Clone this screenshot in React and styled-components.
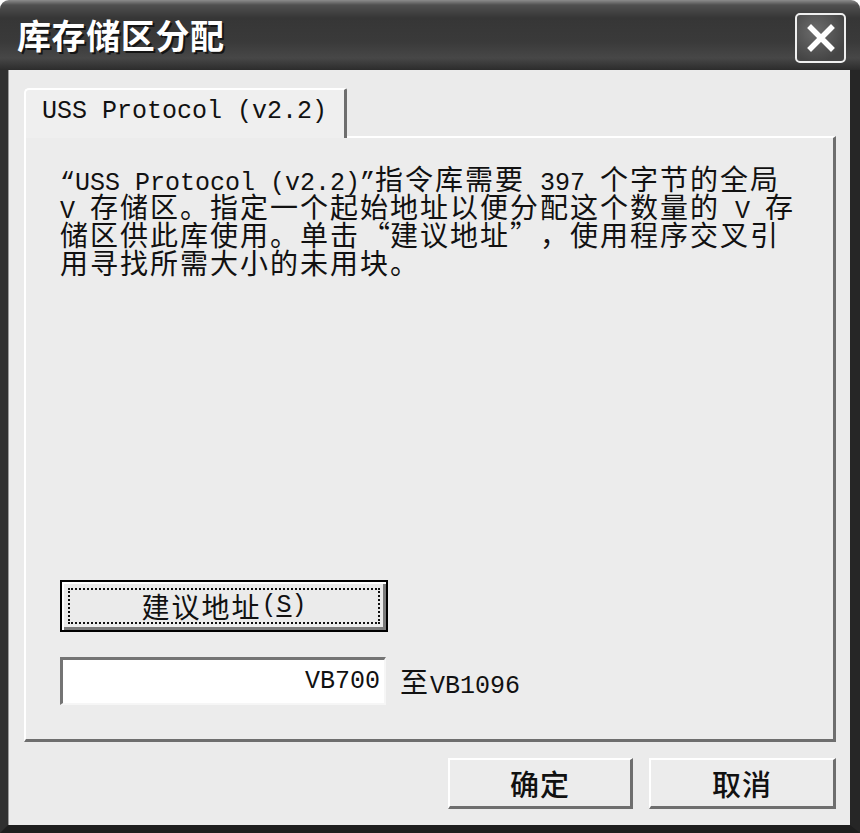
import React from "react";
import styled, { createGlobalStyle } from "styled-components";

const cjk = `"Noto Sans CJK SC", "Noto Sans", sans-serif`;
const mono = `"Liberation Mono", "DejaVu Sans Mono", "Noto Sans CJK SC", monospace`;

const Global = createGlobalStyle`
  html, body { margin: 0; padding: 0; background: #fff; }
  #root { width: 860px; height: 833px; }
`;

const Janela = styled.div`
  width: 860px;
  height: 833px;
  display: flex;
  flex-direction: column;
  border-radius: 9px 9px 0 0;
  overflow: hidden;
  background: #ebebeb;
  font-family: ${cjk};
  color: #111;
`;

const TitleBar = styled.div`
  height: 70px;
  flex-shrink: 0;
  display: flex;
  justify-content: space-between;
  align-items: flex-start;
  padding: 0 14px 0 17px;
  box-sizing: border-box;
  background: linear-gradient(
    to bottom,
    #8c8c8c 0,
    #505050 5px,
    #363636 18px,
    #3a3a3a 42px,
    #474747 58px,
    #2c2c2c 70px
  );
`;

const Title = styled.h1`
  margin: 0;
  padding-top: 11px;
  font-family: ${cjk};
  font-size: 34px;
  line-height: 48px;
  font-weight: 700;
  letter-spacing: 0.6px;
  color: #fff;
  text-shadow: 2px 2px 0 #151515;
`;

const CloseButton = styled.button`
  margin-top: 13px;
  width: 51px;
  height: 50px;
  padding: 0;
  display: flex;
  align-items: center;
  justify-content: center;
  border: 2px solid #efefef;
  border-radius: 5px;
  background: radial-gradient(circle at 40% 35%, #6c6c6c, #454545 75%);
  cursor: pointer;
`;

const Body = styled.div`
  flex: 1;
  display: flex;
  flex-direction: column;
  padding: 18px 14px 16px 16px;
  border-left: 8px solid #303030;
  border-right: 10px solid #262626;
  border-bottom: 8px solid #1e1e1e;
  box-shadow: inset 1px 0 0 #9a9a9a;
`;

const TabStrip = styled.div`
  display: flex;
  height: 48px;
`;

const Tab = styled.div`
  position: relative;
  z-index: 1;
  width: 323px;
  height: 50px;
  margin-bottom: -2px;
  box-sizing: border-box;
  padding: 0 0 2px 16px;
  border-top: 2px solid #fff;
  border-left: 2px solid #fff;
  border-right: 3px solid #6e6e6e;
  border-radius: 5px 2px 0 0;
  background: #efefef;
  font-family: ${mono};
  font-size: 25px;
  line-height: 44px;
  white-space: nowrap;
`;

const Panel = styled.div`
  height: 606px;
  box-sizing: border-box;
  display: flex;
  flex-direction: column;
  padding: 26px 0 34px 34px;
  border-top: 2px solid #fff;
  border-left: 2px solid #fff;
  border-right: 3px solid #6e6e6e;
  border-bottom: 3px solid #6e6e6e;
  background: #ececec;
`;

// texto em celulas de 30px, como a fonte bitmap do original
const Texto = styled.div`
  font-size: 28px;
  letter-spacing: 2px;
  line-height: 28px;
`;

const Linha = styled.div`
  height: 28px;
  white-space: nowrap;
`;

const Mono = styled.span`
  font-family: ${mono};
  font-size: 25px;
  letter-spacing: 0;
  line-height: 0;
`;

const Aspas = styled.span`
  display: inline-block;
  width: 30px;
  letter-spacing: 0;
  text-align: ${(p) => p.$lado};
`;

const SuggestButton = styled.button`
  margin-top: auto;
  width: 328px;
  height: 52px;
  padding: 6px;
  display: flex;
  box-sizing: border-box;
  border: 2px solid #000;
  background: #ebebeb;
  box-shadow: inset 2px 2px 0 #fff, inset -3px -3px 0 #7a7a7a;
  font-family: ${cjk};
  font-size: 28px;
  letter-spacing: 2px;
  color: #111;
  cursor: pointer;
`;

const Foco = styled.span`
  flex: 1;
  display: flex;
  align-items: center;
  justify-content: center;
  border: 2px dotted #111;
  line-height: 28px;
`;

const Sublinhado = styled.span`
  text-decoration: underline;
  text-underline-offset: 3px;
`;

const EnderecoRow = styled.div`
  margin-top: 25px;
  display: flex;
  align-items: center;
  gap: 14px;
`;

const Campo = styled.input`
  width: 326px;
  height: 48px;
  box-sizing: border-box;
  padding: 0 4px 0 0;
  border-top: 3px solid #747474;
  border-left: 3px solid #747474;
  border-right: 2px solid #f6f6f6;
  border-bottom: 2px solid #f6f6f6;
  background: #fff;
  font-family: ${mono};
  font-size: 25px;
  text-align: right;
  color: #111;
  outline: none;
`;

const Faixa = styled.span`
  font-size: 28px;
  letter-spacing: 2px;
  white-space: nowrap;
`;

const Rodape = styled.div`
  margin-top: 16px;
  display: flex;
  justify-content: flex-end;
  gap: 16px;
`;

const Botao = styled.button`
  width: ${(p) => p.$largura}px;
  height: 51px;
  box-sizing: border-box;
  border-top: 2px solid #fff;
  border-left: 2px solid #fff;
  border-right: 3px solid #6e6e6e;
  border-bottom: 3px solid #6e6e6e;
  background: #ececec;
  font-family: ${cjk};
  font-size: 29px;
  font-weight: 500;
  letter-spacing: 1px;
  color: #111;
  cursor: pointer;
`;

function IconeFechar() {
  return (
    <svg width="30" height="30" viewBox="0 0 30 30">
      <path d="M5 5 L25 25 M25 5 L5 25" stroke="#fff" strokeWidth="5.5" strokeLinecap="square" />
    </svg>
  );
}

export default function App() {
  return (
    <>
      <Global />
      <Janela>
        <TitleBar>
          <Title>库存储区分配</Title>
          <CloseButton aria-label="关闭">
            <IconeFechar />
          </CloseButton>
        </TitleBar>
        <Body>
          <TabStrip>
            <Tab>USS Protocol (v2.2)</Tab>
          </TabStrip>
          <Panel>
            <Texto>
              <Linha>
                <Mono>“USS Protocol (v2.2)”</Mono>指令库需要<Mono> 397 </Mono>个字节的全局
              </Linha>
              <Linha>
                <Mono>V </Mono>存储区。指定一个起始地址以便分配这个数量的<Mono> V </Mono>存
              </Linha>
              <Linha>
                储区供此库使用。单击<Aspas $lado="right">“</Aspas>建议地址<Aspas $lado="left">”</Aspas>，使用程序交叉引
              </Linha>
              <Linha>用寻找所需大小的未用块。</Linha>
            </Texto>
            <SuggestButton>
              <Foco>
                建议地址<Mono>(<Sublinhado>S</Sublinhado>)</Mono>
              </Foco>
            </SuggestButton>
            <EnderecoRow>
              <Campo readOnly value="VB700" />
              <Faixa>
                至<Mono>VB1096</Mono>
              </Faixa>
            </EnderecoRow>
          </Panel>
          <Rodape>
            <Botao $largura={185}>确定</Botao>
            <Botao $largura={187}>取消</Botao>
          </Rodape>
        </Body>
      </Janela>
    </>
  );
}
